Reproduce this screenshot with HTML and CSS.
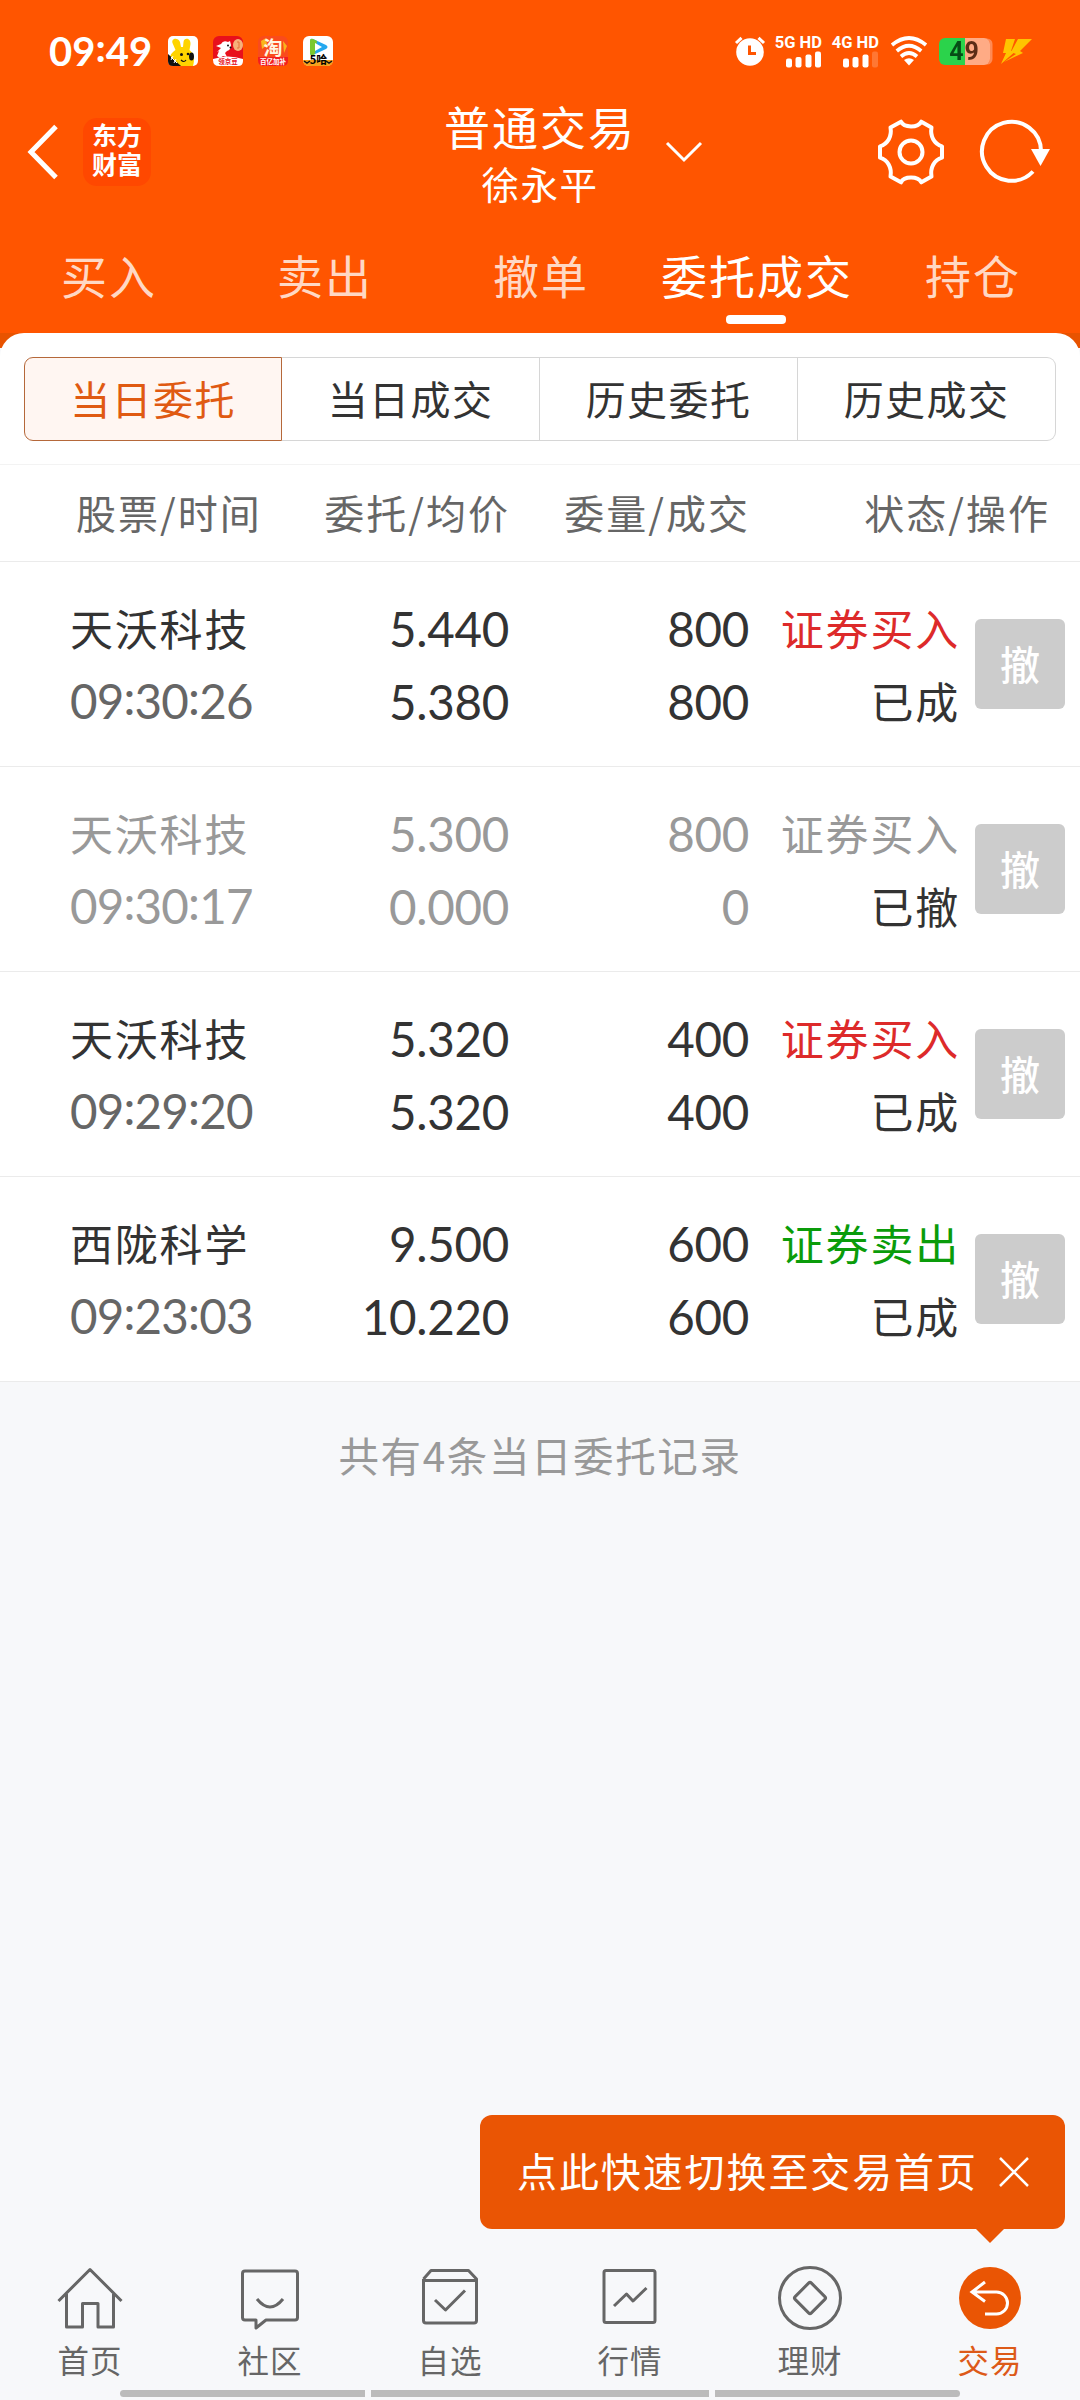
FILE: index.html
```html
<!DOCTYPE html>
<html lang="zh-CN">
<head>
    <meta charset="UTF-8">
    <meta name="viewport" content="width=device-width, initial-scale=1.0">
    <title>普通交易 - 委托成交</title>
    <link rel="stylesheet" href="styles.css">
</head>
<body>
    <div class="app">
        <header class="header">
            <!-- Status bar -->
            <div class="status-bar">
                <span class="clock">09<span class="colon">:</span>49</span>
                <div class="app-icons">
                    <svg width="30" height="30" viewBox="0 0 30 30">
                        <rect width="30" height="30" rx="5" fill="#fff"/>
                        <path d="M4.500 7C3 2 10 1 12 6L13 11H15L15.500 6C16 1 23 2 22.500 8L21.500 14C26 18 27 24 25 30H10L2 21C3 17 6 15 7.500 14Z" fill="#ffd400"/>
                        <path d="M0 18L13 30H5Q0 30 0 25Z" fill="#111"/>
                        <path d="M3 21L9 27M5 20L3 24M8 23L6 27" stroke="#fff" stroke-width="1"/>
                        <ellipse cx="23.500" cy="20.500" rx="2.500" ry="4" fill="#111"/>
                        <circle cx="13.500" cy="18.500" r="1.500" fill="#111"/>
                        <circle cx="20" cy="18" r="1.300" fill="#111"/>
                        <path d="M13 24Q16 27 18 24" stroke="#111" stroke-width="1.200" fill="none"/>
                    </svg>
                    <svg width="30" height="30" viewBox="0 0 30 30">
                        <rect width="30" height="30" rx="6" fill="#e8101c"/>
                        <path d="M0 23Q15 18 30 23V25Q30 30 25 30H6Q0 30 0 24Z" fill="#fff"/>
                        <path d="M3 10L8 8Q10 4 15 6L17 5L18 9Q18 14 14 15L12 17L14 21L10 20L7 22L4 20L6 15L4 16L8 12Z" fill="#fff"/>
                        <circle cx="15" cy="9.500" r="1" fill="#111"/>
                        <circle cx="17.500" cy="11.500" r="1" fill="#111"/>
                        <ellipse cx="25" cy="9" rx="5" ry="6" fill="#f6b27a"/>
                        <path d="M24 6H26V12H24" stroke="#e2743a" fill="none"/>
                        <text x="15" y="28" class="badge-text" fill="#e8101c">领京豆</text>
                    </svg>
                    <svg width="30" height="30" viewBox="0 0 30 30">
                        <rect width="30" height="30" rx="6" fill="#fa4b1c"/>
                        <path d="M3 5L8 2L9 9L4 13ZM25 5L29 10L26 17Z" fill="#f9b51c"/>
                        <path d="M0 21H30V25Q30 30 24 30H6Q0 30 0 24Z" fill="#f31d20"/>
                        <text x="15" y="18.500" class="tao-text" fill="#fff6e0">淘</text>
                        <text x="15" y="28" class="badge-text" fill="#fff">百亿加补</text>
                    </svg>
                    <svg width="30" height="30" viewBox="0 0 30 30">
                        <rect width="30" height="30" rx="6" fill="#fff"/>
                        <path d="M7 5Q7 2 10 3L23 9Q26 11 23 13L10 19Q7 20 7 17Z" fill="#24a8ef"/>
                        <path d="M7 5Q7 2 10 3L14 5L12 18L10 19Q7 20 7 17Z" fill="#7bc82e"/>
                        <path d="M12 7L19 11L12 15Z" fill="#fff"/>
                        <path d="M0 24H30Q30 30 24 30H6Q0 30 0 24Z" fill="#f6a01c"/>
                        <path d="M1 25L4 27L7 25M23 25L26 27L29 25" stroke="#111" stroke-width="1.500" fill="none"/>
                        <text x="15.500" y="28" class="five-text">5哈</text>
                    </svg>
                </div>
                <div class="system-icons">
                    <svg width="30" height="30" viewBox="0 0 30 30">
                        <circle cx="15" cy="16" r="13.800" fill="#fff"/>
                        <path d="M1 7L6.500 1.800M29 7L23.500 1.800" stroke="#fff" stroke-width="3"/>
                        <path d="M14.500 9.500V17.500H21" stroke="#ff5500" stroke-width="3" fill="none"/>
                    </svg>
                    <div class="signal">
                        <span>5G HD</span>
                        <svg width="36" height="17" viewBox="0 0 36 17">
                            <g fill="#fff">
                                <rect x="0" y="7.500" width="6" height="9" rx="2"/>
                                <rect x="9.500" y="6" width="6" height="10.500" rx="2"/>
                                <rect x="19.500" y="3.500" width="6" height="13" rx="2"/>
                                <rect x="29" y="0.500" width="6" height="16" rx="2"/>
                            </g>
                        </svg>
                    </div>
                    <div class="signal">
                        <span>4G HD</span>
                        <svg width="36" height="17" viewBox="0 0 36 17">
                            <g fill="#fff">
                                <rect x="0" y="7.500" width="6" height="9" rx="2"/>
                                <rect x="9.500" y="6" width="6" height="10.500" rx="2"/>
                                <rect x="19.500" y="3.500" width="6" height="13" rx="2"/>
                                <rect x="29" y="0.500" width="6" height="16" rx="2" opacity="0.2"/>
                            </g>
                        </svg>
                    </div>
                    <svg class="wifi" width="38" height="30" viewBox="0 0 38 30">
                        <g stroke="#fff" stroke-width="3.700" fill="none">
                            <path d="M2 9Q19 -5 36 9"/>
                            <path d="M6.800 15Q19 4.500 31.200 15"/>
                            <path d="M11 20.500Q19 13.500 27 20.500"/>
                        </g>
                        <path d="M14 24Q19 20.500 24 24L19 29.500Z" fill="#fff"/>
                    </svg>
                    <div class="battery"><span>49</span></div>
                    <svg class="bolt" width="32" height="26" viewBox="0 0 32 26">
                        <path d="M5 1H14L10 13L16 12L0 26L5 15H2Z" fill="#ffc400"/>
                        <path d="M17 1H31L19 13L22 15L3 24L15 16L10 14Z" fill="#ffc400"/>
                    </svg>
                </div>
            </div>

            <!-- Title bar -->
            <div class="title-bar">
                <div class="title-left">
                    <svg width="32" height="60" viewBox="0 0 32 60">
                        <path d="M29 4.500L4 30L29 55.500" stroke="#fff" stroke-width="5" fill="none"/>
                    </svg>
                    <div class="logo">东方<br>财富</div>
                </div>
                <div class="title">
                    <h1>普通交易</h1>
                    <p>徐永平</p>
                </div>
                <div class="title-right">
                    <svg class="caret" width="38" height="22" viewBox="0 0 38 22">
                        <path d="M2 2L19 19L36 2" stroke="#fff" stroke-width="3" fill="none"/>
                    </svg>
                    <svg class="gear" width="68" height="68" viewBox="0 0 68 68">
                        <g stroke="#fff" stroke-width="4" fill="none" stroke-linejoin="round">
                            <path d="M24 3.700C27 10 41 10 44.300 3.700L54.500 9.500C53 18 57 26 65 28.300V39.700C57 42 53 50 54.500 58.500L44.300 64.300C41 58 27 58 24 64.300L13.500 58.500C15 50 11 42 3 39.700V28.300C11 26 15 18 13.500 9.500Z"/>
                            <circle cx="34" cy="34" r="11.500"/>
                        </g>
                    </svg>
                    <svg width="72" height="68" viewBox="0 0 72 68">
                        <path d="M62 33A29.500 29.500 0 1 0 54 53.500" stroke="#fff" stroke-width="4" fill="none"/>
                        <path d="M52 31H71L61.500 48Z" fill="#fff"/>
                    </svg>
                </div>
            </div>

            <!-- Main tabs -->
            <nav class="tabs">
                <a class="tab">买入</a>
                <a class="tab">卖出</a>
                <a class="tab">撤单</a>
                <a class="tab active">委托成交</a>
                <a class="tab">持仓</a>
            </nav>
        </header>

        <main class="content">
            <div class="card-top">
                <div class="segments">
                    <div class="segment active">当日委托</div>
                    <div class="segment">当日成交</div>
                    <div class="segment">历史委托</div>
                    <div class="segment">历史成交</div>
                </div>
            </div>

            <div class="list-head">
                <span>股票/时间</span>
                <span>委托/均价</span>
                <span>委量/成交</span>
                <span>状态/操作</span>
            </div>

            <!-- Orders -->
            <div class="order">
                <div class="cell name"><span>天沃科技</span><span class="num time">09<span class="colon">:</span>30<span class="colon">:</span>26</span></div>
                <div class="cell num"><span>5.440</span><span>5.380</span></div>
                <div class="cell num"><span>800</span><span>800</span></div>
                <div class="cell state"><span class="buy">证券买入</span><span>已成</span></div>
                <button class="cancel-btn">撤</button>
            </div>
            <div class="order cancelled">
                <div class="cell name"><span>天沃科技</span><span class="num time">09<span class="colon">:</span>30<span class="colon">:</span>17</span></div>
                <div class="cell num"><span>5.300</span><span>0.000</span></div>
                <div class="cell num"><span>800</span><span>0</span></div>
                <div class="cell state"><span class="buy">证券买入</span><span class="done">已撤</span></div>
                <button class="cancel-btn">撤</button>
            </div>
            <div class="order">
                <div class="cell name"><span>天沃科技</span><span class="num time">09<span class="colon">:</span>29<span class="colon">:</span>20</span></div>
                <div class="cell num"><span>5.320</span><span>5.320</span></div>
                <div class="cell num"><span>400</span><span>400</span></div>
                <div class="cell state"><span class="buy">证券买入</span><span>已成</span></div>
                <button class="cancel-btn">撤</button>
            </div>
            <div class="order">
                <div class="cell name"><span>西陇科学</span><span class="num time">09<span class="colon">:</span>23<span class="colon">:</span>03</span></div>
                <div class="cell num"><span>9.500</span><span>10.220</span></div>
                <div class="cell num"><span>600</span><span>600</span></div>
                <div class="cell state"><span class="sell">证券卖出</span><span>已成</span></div>
                <button class="cancel-btn">撤</button>
            </div>

            <p class="summary">共有4条当日委托记录</p>
        </main>

        <div class="toast">
            <span>点此快速切换至交易首页</span>
            <svg width="32" height="32" viewBox="0 0 32 32">
                <path d="M2 2L30 30M30 2L2 30" stroke="#fff" stroke-width="2.500"/>
            </svg>
        </div>

        <!-- Bottom navigation -->
        <footer class="bottom-nav">
            <a class="nav-item">
                <svg width="68" height="68" viewBox="0 0 68 68">
                    <path d="M2.500 36L34 4.500L65.500 36M10.500 29V62H26.500V38.500H42V62H57.500V29"/>
                </svg>
                <span>首页</span>
            </a>
            <a class="nav-item">
                <svg width="68" height="68" viewBox="0 0 68 68">
                    <path d="M9 6H59Q61.500 6 61.500 8.500V52.500Q61.500 55 59 55H30L20 63V55H9Q6.500 55 6.500 52.500V8.500Q6.500 6 9 6Z"/>
                    <path d="M21 34Q34 50 47 34"/>
                </svg>
                <span>社区</span>
            </a>
            <a class="nav-item">
                <svg width="68" height="68" viewBox="0 0 68 68">
                    <path d="M7.500 14L15 5.500H52.500L60.500 14V55.500Q60.500 58 58 58H10Q7.500 58 7.500 55.500V14M7.500 15.500H60.500"/>
                    <path d="M19 35L29.500 45L49 25.500"/>
                </svg>
                <span>自选</span>
            </a>
            <a class="nav-item">
                <svg width="68" height="68" viewBox="0 0 68 68">
                    <rect x="8" y="5.500" width="51" height="52" rx="2"/>
                    <path d="M18 41L30.500 29L37 36L50.500 23"/>
                </svg>
                <span>行情</span>
            </a>
            <a class="nav-item">
                <svg width="68" height="68" viewBox="0 0 68 68">
                    <circle cx="34" cy="33" r="30.500"/>
                    <rect x="22.500" y="21.500" width="23" height="23" rx="2" transform="rotate(45 34 33)"/>
                </svg>
                <span>理财</span>
            </a>
            <a class="nav-item active">
                <svg width="68" height="68" viewBox="0 0 68 68">
                    <circle class="dot" cx="34" cy="33" r="31"/>
                    <path d="M29 17L16 27L29 36.500M16 27H40.500A11 11 0 0 1 40.500 49H29"/>
                </svg>
                <span>交易</span>
            </a>
        </footer>
        <div class="gesture-bar"><i></i><i></i><i></i></div>
    </div>
</body>
</html>
```
FILE: styles.css
```css
* {
    box-sizing: border-box;
}
body {
    margin: 0;
    font-family: "Noto Sans CJK SC", sans-serif;
    color: #333;
    background: #f7f8fa;
}
h1, p {
    margin: 0;
    font-weight: normal;
}
svg {
    display: block;
    flex-shrink: 0;
    overflow: visible;
}
.app {
    position: relative;
    display: flex;
    flex-direction: column;
    width: 1080px;
    height: 2400px;
    overflow: hidden;
}
.header {
    height: 333px;
    background: #ff5500;
    color: #fff;
}
.colon {
    vertical-align: 0.09em;
    line-height: 0;
}

/* status bar */
.status-bar {
    display: flex;
    align-items: center;
    height: 102px;
    padding-left: 49px;
}
.clock {
    width: 119px;
    font: bold 40px/40px Lato, sans-serif;
    letter-spacing: 0;
}
.app-icons {
    display: flex;
    gap: 15px;
}
.badge-text {
    font-size: 6.5px;
    font-weight: bold;
    text-anchor: middle;
}
.tao-text {
    font-size: 19px;
    font-weight: bold;
    text-anchor: middle;
}
.five-text {
    font-size: 11px;
    font-weight: bold;
    text-anchor: middle;
}
.system-icons {
    display: flex;
    align-items: center;
    margin-left: auto;
    padding-right: 47px;
}
.signal {
    display: flex;
    flex-direction: column;
    align-items: flex-end;
    width: 48px;
    margin-left: 9px;
    font: bold 16.5px/17px Roboto, sans-serif;
    white-space: nowrap;
}
.wifi {
    margin-left: 11px;
}
.battery {
    width: 51px;
    height: 27px;
    margin: 0 11px 0 11px;
    border-radius: 6px;
    background: linear-gradient(90deg, #2bd34b 50%, #ffab85 50%);
    box-shadow: 3px 0 0 -0.5px #ff8a55;
    text-align: center;
    font: bold 25px/28px Roboto, sans-serif;
}
.battery span {
    background: linear-gradient(90deg, #064d16 48%, #5d2d16 48%);
    -webkit-background-clip: text;
    background-clip: text;
    color: transparent;
    letter-spacing: 1px;
}

/* title bar */
.title-bar {
    display: grid;
    grid-template-columns: 1fr 192px 1fr;
    height: 121px;
}
.title-left {
    display: flex;
    align-items: center;
    padding: 0 0 22px 27px;
}
.logo {
    width: 68px;
    height: 68px;
    margin-left: 24px;
    padding-top: 2px;
    border-radius: 14px;
    background: #ff4800;
    text-align: center;
    font-size: 25px;
    line-height: 29px;
    font-weight: bold;
}
.title {
    text-align: center;
}
.title h1 {
    height: 56px;
    font-size: 46px;
    line-height: 46px;
    letter-spacing: 2px;
}
.title p {
    font-size: 37.5px;
    line-height: 50px;
    letter-spacing: 1.5px;
}
.title-right {
    display: flex;
    align-items: center;
    padding: 0 29px 22px 29px;
}
.gear {
    margin-left: auto;
    margin-right: 34px;
}

/* main tabs */
.tabs {
    display: grid;
    grid-template-columns: repeat(5, 216px);
    padding-top: 20px;
}
.tab {
    display: flex;
    flex-direction: column;
    align-items: center;
    padding-left: 2px;
    color: #ffd8c4;
    font-size: 46px;
    line-height: 62px;
    letter-spacing: 2px;
}
.tab.active {
    color: #fff;
}
.tab.active::after {
    content: "";
    width: 60px;
    height: 9px;
    margin: 10px 2px 0 0;
    border-radius: 4px;
    background: #fff;
}

/* list */
.content {
    background: linear-gradient(#e85300 15px, #f7f8fa 15px);
}
.card-top {
    height: 132px;
    padding: 24px;
    border-radius: 24px 24px 0 0;
    border-bottom: 1px solid #f3f3f3;
    background: #fff;
}
.segments {
    display: grid;
    grid-template-columns: repeat(4, 1fr);
    height: 84px;
}
.segment {
    border: 1px solid #d6d6d6;
    border-left-width: 0;
    text-align: center;
    font-size: 40px;
    line-height: 81px;
    letter-spacing: 1.4px;
}
.segment:last-child {
    border-radius: 0 9px 9px 0;
}
.segment.active {
    border: 1px solid #b5683a;
    border-radius: 9px 0 0 9px;
    background: #fff6f2;
    color: #e05a12;
}
.list-head {
    display: grid;
    grid-template-columns: 234px 200px 240px 300px;
    height: 97px;
    padding-left: 76px;
    border-bottom: 1px solid #ebebeb;
    background: #fff;
    color: #666;
    font-size: 40px;
    line-height: 94px;
    letter-spacing: 2px;
}
.list-head span + span {
    text-align: right;
}
.order {
    display: grid;
    grid-template-columns: 239px 200px 240px 210px 90px;
    height: 205px;
    padding-left: 70px;
    border-bottom: 1px solid #ebebeb;
    background: #fff;
}
.cell {
    display: flex;
    flex-direction: column;
    padding-top: 30px;
    text-align: right;
    font-size: 43px;
    line-height: 73px;
    letter-spacing: 1.8px;
}
.cell span {
    white-space: nowrap;
}
.state {
    padding-top: 29px;
    padding-left: 1px;
    margin-right: -1px;
}
.name {
    padding-top: 29px;
    text-align: left;
}
.num {
    font-family: Lato, sans-serif;
    font-size: 47.5px;
    letter-spacing: -0.3px;
}
.time {
    color: #666;
    letter-spacing: -0.8px;
}
.buy {
    color: #dd2a2a;
}
.sell {
    color: #0a9c0a;
}
.cancelled, .cancelled .time, .cancelled .buy {
    color: #999;
}
.cancelled .done {
    color: #333;
}
.cancel-btn {
    width: 90px;
    height: 90px;
    margin: 57px 0 0 16px;
    padding: 0 0 3px;
    border: none;
    border-radius: 6px;
    background: #ccc;
    color: #fff;
    font-family: inherit;
    font-size: 40px;
    font-weight: 500;
}
.summary {
    padding-top: 43px;
    text-align: center;
    color: #999;
    font-size: 40.5px;
    line-height: 60px;
    letter-spacing: 1.6px;
}

/* toast over the bottom navigation */
.toast {
    position: absolute;
    left: 480px;
    top: 2115px;
    display: flex;
    align-items: center;
    justify-content: space-between;
    width: 585px;
    height: 114px;
    padding: 0 35px 0 37px;
    border-radius: 12px;
    background: #ea5504;
    color: #fff;
    font-size: 40px;
    letter-spacing: 1.9px;
    white-space: nowrap;
}
.toast span {
    padding-bottom: 4px;
}
.toast::after {
    content: "";
    position: absolute;
    right: 60px;
    top: 113px;
    border: 15px solid transparent;
    border-top-color: #ea5504;
    border-bottom: 0;
}

/* bottom navigation */
.bottom-nav {
    display: grid;
    grid-template-columns: repeat(6, 180px);
    margin-top: auto;
}
.nav-item {
    display: flex;
    flex-direction: column;
    align-items: center;
    height: 125px;
    color: #666;
    font-size: 31.5px;
    line-height: 53px;
    letter-spacing: 1px;
}
.nav-item svg {
    margin-right: 1px;
    fill: none;
    stroke: #666;
    stroke-width: 3;
    stroke-linejoin: round;
}
.nav-item.active {
    color: #dd5a18;
}
.nav-item.active svg {
    stroke: #fff;
    stroke-linejoin: miter;
}
.nav-item .dot {
    fill: #ea5504;
    stroke: none;
}
.gesture-bar {
    display: grid;
    grid-template-columns: 245px 338px 245px;
    gap: 6px;
    height: 10px;
    padding-left: 120px;
}
.gesture-bar i {
    height: 7px;
    background: #bbb;
}
.gesture-bar i:first-child {
    border-radius: 4px 0 0 4px;
}
.gesture-bar i:last-child {
    border-radius: 0 4px 4px 0;
}
```
